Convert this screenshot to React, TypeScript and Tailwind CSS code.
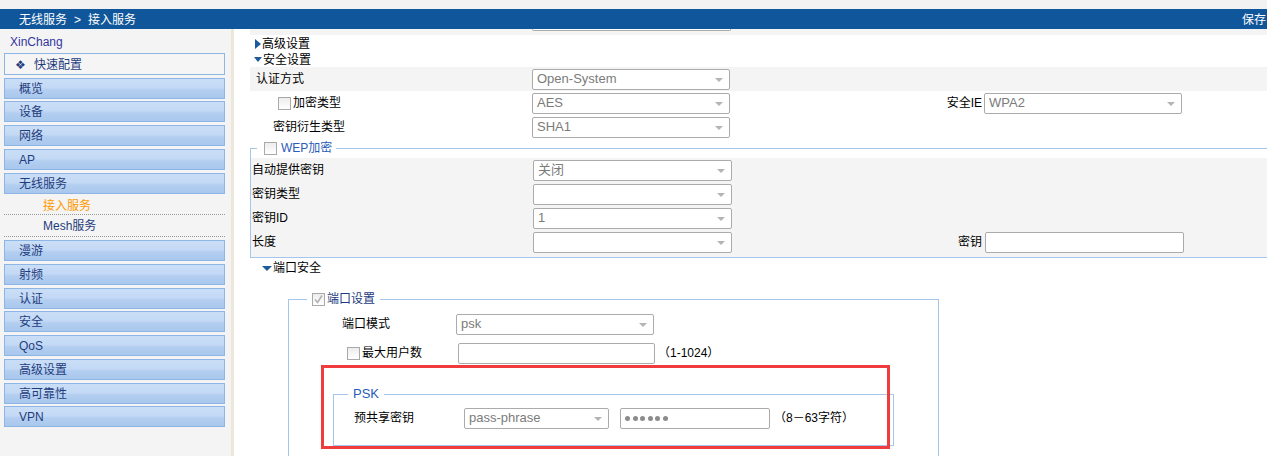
import React from 'react';

const menuTop = ['概览', '设备', '网络', 'AP', '无线服务'];
const menuBottom = ['漫游', '射频', '认证', '安全', 'QoS', '高级设置', '高可靠性', 'VPN'];

const MenuItem = ({ label }: { label: string }) => (
  <div className="h-[21px] w-[221px] shrink-0 border border-[#8db5e6] bg-[linear-gradient(to_bottom,#cadef7_0%,#c4d9f5_45%,#b3cef0_58%,#a9c7ed_100%)] pl-[14px] pt-[1px] flex items-center text-[#1f3d7d]">
    {label}
  </div>
);

const Select = ({ value, className }: { value?: string; className: string }) => (
  <div className={`relative h-[21px] shrink-0 border border-[#ababab] rounded-[2px] bg-white flex items-center pl-[4px] text-[13px] text-[#7b7b7b] ${className}`}>
    {value}
    <span className="absolute right-[6px] top-[8px] w-0 h-0 border-x-[4px] border-x-transparent border-t-[4px] border-t-[#b4b4b4]" />
  </div>
);

const TextBox = ({ className, children }: { className: string; children?: React.ReactNode }) => (
  <div className={`h-[21px] shrink-0 border border-[#ababab] rounded-[2px] bg-white flex items-center pl-[4px] ${className}`}>
    {children}
  </div>
);

const Check = ({ checked }: { checked?: boolean }) => (
  <span className="inline-flex w-[13px] h-[13px] shrink-0 border border-[#a9a9a9] bg-[linear-gradient(to_bottom,#ededed,#ffffff)] items-center justify-center">
    {checked && (
      <svg width="11" height="11" viewBox="0 0 11 11">
        <path d="M2 5.5 L4.5 8.5 L9 1.5" fill="none" stroke="#b2b2b2" strokeWidth="1.6" />
      </svg>
    )}
  </span>
);

const TriRight = () => (
  <span className="inline-block w-0 h-0 border-y-[5px] border-y-transparent border-l-[6px] border-l-[#1b5b9c]" />
);

const TriDown = ({ className }: { className: string }) => (
  <span className={`inline-block w-0 h-0 border-x-transparent border-t-[#1b5b9c] ${className}`} />
);

export default function App() {
  return (
    <div className="w-[1267px] h-[456px] overflow-hidden bg-white flex flex-col text-[12px] text-black font-['Liberation_Sans','Noto_Sans_CJK_SC',sans-serif]">
      <div className="h-[9px] shrink-0 bg-[#f2f2f2]" />

      {/* breadcrumb bar */}
      <header className="h-[20px] shrink-0 bg-[#10569a] text-white flex items-center justify-between pl-[19px] pr-[1px] pt-[1px]">
        <div>
          无线服务<span className="mx-[7px]">&gt;</span>接入服务
        </div>
        <div>保存</div>
      </header>

      <div className="flex flex-1 min-h-0">
        {/* sidebar */}
        <aside className="w-[234px] shrink-0 bg-[#f4f4f4] border-r-[3px] border-[#ebe8da] pl-[4px]">
          <div className="h-[24px] pl-[6px] pt-[1px] flex items-center text-[#3535a0]">XinChang</div>
          <div className="h-[22px] w-[221px] border border-[#8db5e6] bg-[#f5f5f5] flex items-center pl-[10px] pt-[1px] text-[#1f3d7d]">
            <span className="inline-block w-[10px] text-[12px] leading-none font-['DejaVu_Sans',sans-serif]">❖</span>
            <span className="ml-[9px]">快速配置</span>
          </div>
          <div className="mt-[2.5px] flex flex-col gap-[2.75px]">
            {menuTop.map((m) => (
              <MenuItem key={m} label={m} />
            ))}
            <div className="w-[221px]">
              <div className="h-[19px] pl-[39px] pt-[1px] flex items-center text-[#ff9900] border-b border-dotted border-[#9a9a9a]">接入服务</div>
              <div className="h-[22px] pl-[39px] pt-[1px] flex items-center text-[#1f3d7d] border-b border-dotted border-[#9a9a9a]">Mesh服务</div>
            </div>
            {menuBottom.map((m) => (
              <MenuItem key={m} label={m} />
            ))}
          </div>
        </aside>

        {/* content */}
        <main className="relative flex-1 min-w-0 overflow-hidden pl-[16px]">
          {/* row cut off at the top by scrolling */}
          <div className="h-[6px] bg-[#f4f4f4]">
            <div className="ml-[282px] w-[199px] h-[2px] border-x border-b border-[#ababab] rounded-b-[2px] bg-white" />
          </div>

          <div className="h-[16px] flex items-center pl-[5px] pt-[1px] gap-[1px]">
            <TriRight />
            <span>高级设置</span>
          </div>
          <div className="h-[16px] flex items-center pl-[4px] pt-[1px] gap-[1px]">
            <TriDown className="border-x-[4px] border-t-[5px]" />
            <span>安全设置</span>
          </div>

          {/* security settings */}
          <div className="h-[24px] bg-[#f4f4f4] flex items-center">
            <div className="w-[282px] pl-[6px]">认证方式</div>
            <Select value="Open-System" className="w-[198px]" />
          </div>
          <div className="h-[24px] flex items-center">
            <div className="w-[282px] pl-[28px] flex items-center gap-[2px]">
              <Check />
              <span>加密类型</span>
            </div>
            <Select value="AES" className="w-[198px]" />
            <div className="w-[254px] text-right pr-[2px]">安全IE</div>
            <Select value="WPA2" className="w-[198px]" />
          </div>
          <div className="h-[24px] flex items-center">
            <div className="w-[282px] pl-[23px]">密钥衍生类型</div>
            <Select value="SHA1" className="w-[198px]" />
          </div>

          {/* WEP */}
          <fieldset className="mt-[2px] border-t border-l border-b border-[#a5c5eb]">
            <legend className="ml-[6px] pl-[7px] pr-[4px] h-[14px] flex items-center gap-[4px] text-[#2a5cb8]">
              <Check />
              <span>WEP加密</span>
            </legend>
            <div className="mt-[3px] bg-[#f4f4f4] pl-[1px] pb-[3px]">
              <div className="h-[24px] flex items-center">
                <div className="w-[281px]">自动提供密钥</div>
                <Select value="关闭" className="w-[199px]" />
              </div>
              <div className="h-[24px] flex items-center">
                <div className="w-[281px]">密钥类型</div>
                <Select className="w-[199px]" />
              </div>
              <div className="h-[24px] flex items-center">
                <div className="w-[281px]">密钥ID</div>
                <Select value="1" className="w-[199px]" />
              </div>
              <div className="h-[24px] flex items-center">
                <div className="w-[281px]">长度</div>
                <Select className="w-[199px]" />
                <div className="w-[253px] text-right pr-[3px]">密钥</div>
                <TextBox className="w-[199px]" />
              </div>
            </div>
          </fieldset>

          {/* port security */}
          <div className="h-[20px] flex items-center pl-[12px] gap-[1px]">
            <TriDown className="border-x-[5px] border-t-[5px]" />
            <span>端口安全</span>
          </div>

          <fieldset className="mt-[14px] ml-[38px] w-[651px] border border-[#a5c5eb] pb-[40px]">
            <legend className="ml-[18px] pl-[5px] pr-[5px] h-[14px] flex items-center gap-[2px] text-[#1c3a80]">
              <Check checked />
              <span>端口设置</span>
            </legend>
            <div className="pt-[6px]">
              <div className="h-[24px] flex items-center pl-[53px]">
                <div className="w-[114px]">端口模式</div>
                <Select value="psk" className="w-[198px]" />
              </div>
              <div className="mt-[5px] h-[24px] flex items-center pl-[58px]">
                <div className="w-[111px] flex items-center gap-[2px]">
                  <Check />
                  <span>最大用户数</span>
                </div>
                <TextBox className="w-[197px]" />
                <span className="ml-[3px]">（1-1024）</span>
              </div>
            </div>

            <fieldset className="mt-[22px] ml-[44px] w-[561px] border border-[#a5c5eb] pb-[15px]">
              <legend className="ml-[14px] px-[5px] h-[14px] leading-[14px] text-[13px] text-[#2a5cb8]">PSK</legend>
              <div className="pt-[5px] h-[29px] flex items-center pl-[20px]">
                <div className="w-[110px]">预共享密钥</div>
                <Select value="pass-phrase" className="w-[145px]" />
                <TextBox className="ml-[11px] w-[150px] gap-[2.5px]">
                  {[0, 1, 2, 3, 4, 5].map((i) => (
                    <span key={i} className="w-[5px] h-[5px] rounded-full bg-[#8c8c8c]" />
                  ))}
                </TextBox>
                <span className="ml-[4px]">（8－63字符）</span>
              </div>
            </fieldset>
          </fieldset>

          {/* red annotation frame */}
          <div className="absolute left-[87px] top-[336px] w-[569px] h-[84px] border-[3px] border-[#ef3d3d]" />
        </main>
      </div>
    </div>
  );
}
